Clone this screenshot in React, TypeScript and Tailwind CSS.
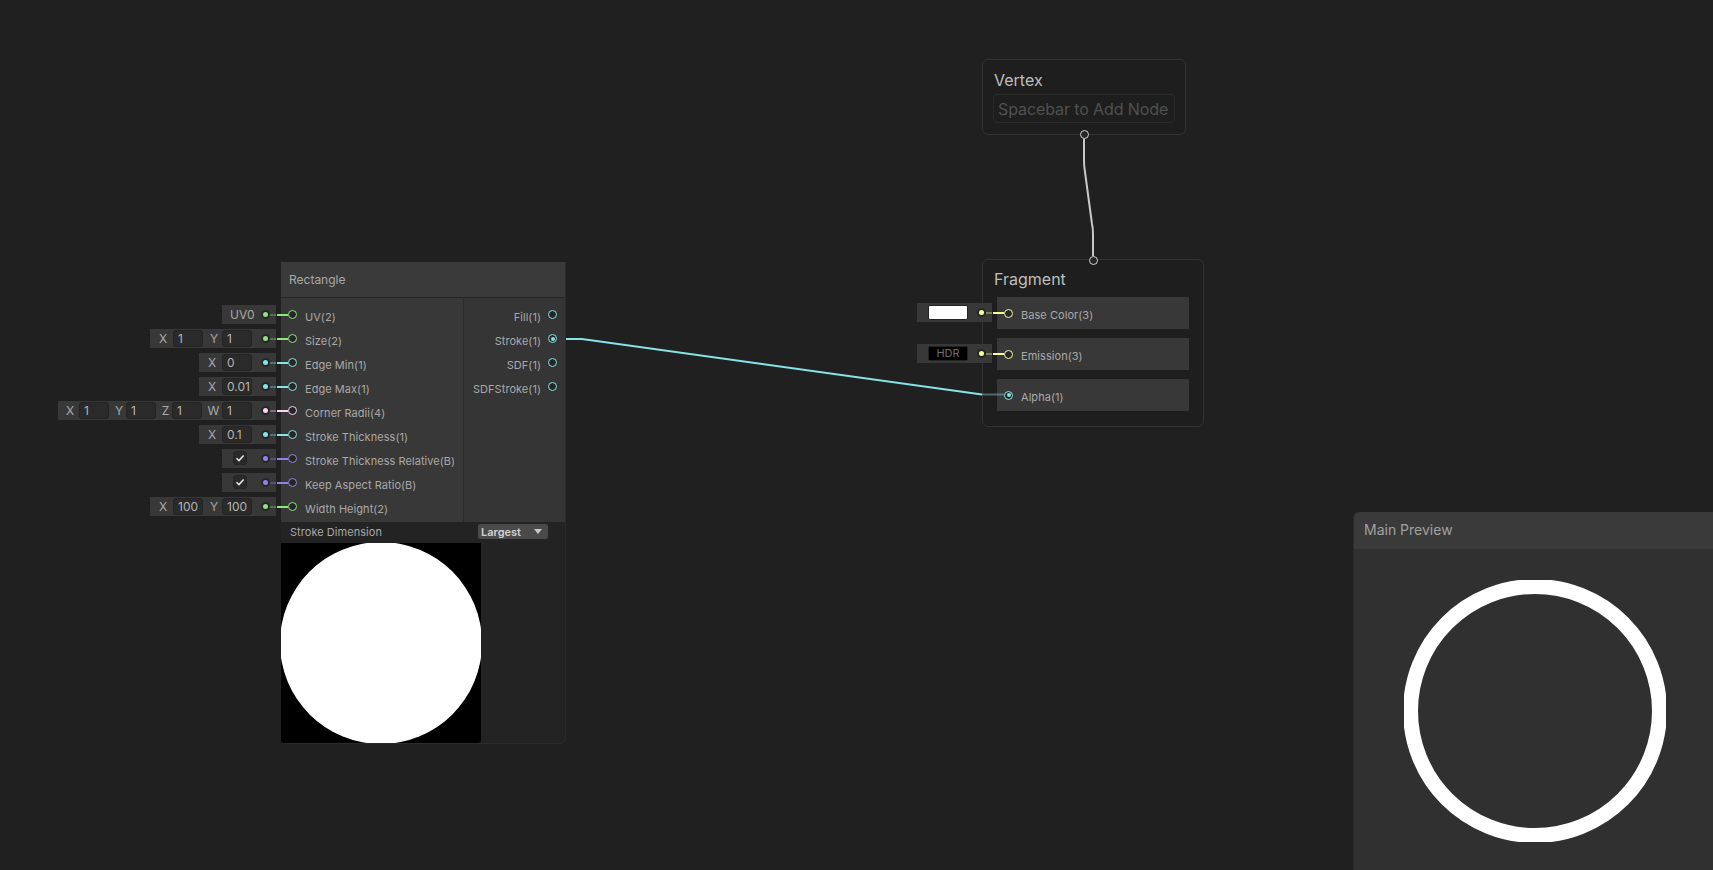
import { ReactNode } from "react";

type PortKind = "green" | "cyan" | "pink" | "purple" | "yellow";

const portStyles: Record<PortKind, { border: string; fill: string; dim: string }> = {
  green: { border: "border-[#8fe57f]", fill: "bg-[#8fe57f]", dim: "bg-[#8fe57f]/35" },
  cyan: { border: "border-[#84e4e7]", fill: "bg-[#84e4e7]", dim: "bg-[#84e4e7]/35" },
  pink: { border: "border-[#fcd1f1]", fill: "bg-[#fcd1f1]", dim: "bg-[#fcd1f1]/35" },
  purple: { border: "border-[#9481e6]", fill: "bg-[#9481e6]", dim: "bg-[#9481e6]/35" },
  yellow: { border: "border-[#f6ff9a]", fill: "bg-[#f6ff9a]", dim: "bg-[#f6ff9a]/35" },
};

interface Field {
  axis: string;
  value: string;
  labelWidth: string;
}

interface Input {
  name: string;
  kind: PortKind;
  text?: string;
  fields?: Field[];
  check?: boolean;
}

const inputs: Input[] = [
  { name: "UV(2)", kind: "green", text: "UV0" },
  {
    name: "Size(2)",
    kind: "green",
    fields: [
      { axis: "X", value: "1", labelWidth: "w-[23px]" },
      { axis: "Y", value: "1", labelWidth: "w-[19px]" },
    ],
  },
  { name: "Edge Min(1)", kind: "cyan", fields: [{ axis: "X", value: "0", labelWidth: "w-[23px]" }] },
  { name: "Edge Max(1)", kind: "cyan", fields: [{ axis: "X", value: "0.01", labelWidth: "w-[23px]" }] },
  {
    name: "Corner Radii(4)",
    kind: "pink",
    fields: [
      { axis: "X", value: "1", labelWidth: "w-[21px]" },
      { axis: "Y", value: "1", labelWidth: "w-[17px]" },
      { axis: "Z", value: "1", labelWidth: "w-[16px]" },
      { axis: "W", value: "1", labelWidth: "w-[20px]" },
    ],
  },
  { name: "Stroke Thickness(1)", kind: "cyan", fields: [{ axis: "X", value: "0.1", labelWidth: "w-[23px]" }] },
  { name: "Stroke Thickness Relative(B)", kind: "purple", check: true },
  { name: "Keep Aspect Ratio(B)", kind: "purple", check: true },
  {
    name: "Width Height(2)",
    kind: "green",
    fields: [
      { axis: "X", value: "100", labelWidth: "w-[23px]" },
      { axis: "Y", value: "100", labelWidth: "w-[19px]" },
    ],
  },
];

const outputs = [
  { name: "Fill(1)", connected: false },
  { name: "Stroke(1)", connected: true },
  { name: "SDF(1)", connected: false },
  { name: "SDFStroke(1)", connected: false },
];

function ChipTail({ kind }: { kind: PortKind }) {
  const style = portStyles[kind];
  return (
    <>
      <div className="ml-[9px] flex h-[9px] w-[9px] items-center justify-center rounded-full bg-[#262626]">
        <div className={`h-[5px] w-[5px] rounded-full ${style.fill}`} />
      </div>
      <div className={`h-[2px] w-[6px] ${style.dim}`} />
    </>
  );
}

function InputChip({ input }: { input: Input }) {
  return (
    <div className="flex h-[19px] items-center bg-[#383838] text-[12px] text-[#a8a8a8]">
      {input.text && <div className="w-[30px] whitespace-nowrap pl-[8px]">{input.text}</div>}
      {input.check && (
        <div className="mb-[2px] ml-[11px] mr-[5px] flex h-[14px] w-[14px] items-center justify-center rounded-[3px] border border-[#232323] bg-[#2a2a2a]">
          <svg width="10" height="10" viewBox="0 0 10 10" fill="none">
            <path d="M1.5 5.2 4 7.6 8.6 2.4" stroke="#e6e6e6" strokeWidth="1.5" />
          </svg>
        </div>
      )}
      {input.fields?.map((field) => (
        <div key={field.axis} className="flex items-center">
          <div className={`${field.labelWidth} pl-[3px] text-center`}>{field.axis}</div>
          <div className="flex h-[17px] w-[30px] items-center rounded-[3px] border border-[#232323] bg-[#2a2a2a] pl-[4px] text-[#b4b4b4]">
            {field.value}
          </div>
        </div>
      ))}
      <ChipTail kind={input.kind} />
    </div>
  );
}

function Ring({ kind, connected }: { kind: PortKind; connected?: boolean }) {
  const style = portStyles[kind];
  return (
    <div
      className={`flex h-[9px] w-[9px] shrink-0 items-center justify-center rounded-full border-[1.5px] ${style.border} bg-[#262626]`}
    >
      {connected && <div className={`h-[4px] w-[4px] rounded-full ${style.fill}`} />}
    </div>
  );
}

function PortLabel({ children }: { children: ReactNode }) {
  return <span className="mt-[4px] whitespace-nowrap text-[11px] leading-4 tracking-[0.05px] text-[#a8a8a8]">{children}</span>;
}

function RectangleNode() {
  return (
    <div className="absolute left-[58px] top-[262px] flex">
      <div className="flex w-[218px] flex-col items-end gap-[5px] pt-[43px]">
        {inputs.map((input) => (
          <InputChip key={input.name} input={input} />
        ))}
      </div>
      <div className="ml-[5px] flex h-[482px] w-[285px] flex-col rounded-b-[6px] border-b border-r border-[#2b2b2b] bg-[#232323]">
        <div className="flex h-[36px] items-center border-b border-[#262626] bg-[#3a3a3a] pl-[8px] pt-[1px] text-[12px] text-[#a8a8a8]">
          Rectangle
        </div>
        <div className="flex h-[225px]">
          <div className="flex w-[183px] flex-col border-r border-[#2c2c2c] bg-[#383838] pt-[5px]">
            {inputs.map((input) => (
              <div key={input.name} className="flex h-[24px] items-center">
                <div className={`-ml-[4px] h-[2px] w-[11px] ${portStyles[input.kind].fill}`} />
                <Ring kind={input.kind} />
                <div className="ml-[8px] flex">
                  <PortLabel>{input.name}</PortLabel>
                </div>
              </div>
            ))}
          </div>
          <div className="flex flex-1 flex-col bg-[#353535] pt-[5px]">
            {outputs.map((output) => (
              <div key={output.name} className="flex h-[24px] items-center justify-end pr-[8px]">
                <PortLabel>{output.name}</PortLabel>
                <div className="ml-[7px]">
                  <Ring kind="cyan" connected={output.connected} />
                </div>
              </div>
            ))}
          </div>
        </div>
        <div className="flex h-[21px] items-center justify-between pb-[2px] pl-[9px] pr-[17px]">
          <span className="text-[11px] tracking-[0.05px] text-[#a8a8a8]">Stroke Dimension</span>
          <div className="flex h-[15px] w-[70px] items-center justify-between rounded-[2px] bg-[#4a4a4a] pl-[3px] pr-[6px] text-[11px] font-semibold text-[#d2d2d2]">
            Largest
            <svg width="8" height="5" viewBox="0 0 8 5">
              <polygon points="0,0 8,0 4,5" fill="#c8c8c8" />
            </svg>
          </div>
        </div>
        <div className="h-[200px] w-[200px] overflow-hidden rounded-b-[3px] bg-black">
          <div className="-m-[1px] h-[202px] w-[202px] rounded-full bg-white" />
        </div>
      </div>
    </div>
  );
}

function VertexNode() {
  return (
    <div className="absolute left-[982px] top-[59px] h-[76px] w-[204px] rounded-[6px] border border-[#333333] bg-[#1e1e1e] px-[10px] pt-[9px]">
      <div className="pl-[1px] text-[16px] leading-[22px] text-[#bebebe]">Vertex</div>
      <div className="mt-[3px] flex h-[29px] items-center whitespace-nowrap rounded-[4px] border border-[#2a2a2a] pl-[4px] text-[16px] tracking-[-0.1px] text-[#505050]">
        Spacebar to Add Node
      </div>
      <div className="absolute -bottom-[5px] left-[97px] h-[9px] w-[9px] rounded-full border-[1.5px] border-[#d2d2d2] bg-[#262626]" />
    </div>
  );
}

function FragmentRow({ label, kind, children }: { label: string; kind: PortKind; children?: ReactNode }) {
  const style = portStyles[kind];
  return (
    <div className="relative flex h-[32px] items-center bg-[#383838]">
      {children && (
        <div className="absolute right-full top-[6px] mr-[5px] flex h-[19px] w-[75px] items-center bg-[#383838] pl-[11px]">
          {children}
          <ChipTail kind={kind} />
        </div>
      )}
      <div className={`-ml-[4px] h-[2px] w-[11px] ${children ? style.fill : "bg-transparent"}`} />
      <Ring kind={kind} connected={!children} />
      <div className="ml-[8px] flex">
        <PortLabel>{label}</PortLabel>
      </div>
    </div>
  );
}

function FragmentNode() {
  return (
    <div className="absolute left-[982px] top-[259px] h-[168px] w-[222px] rounded-[6px] border border-[#333333] bg-[#1e1e1e] px-[14px] pt-[7px]">
      <div className="-ml-[3px] text-[16px] leading-[24px] text-[#bebebe]">Fragment</div>
      <div className="mt-[6px] flex flex-col gap-[9px]">
        <FragmentRow label="Base Color(3)" kind="yellow">
          <div className="h-[15px] w-[40px] rounded-[2px] border border-[#232323] bg-white" />
        </FragmentRow>
        <FragmentRow label="Emission(3)" kind="yellow">
          <div className="flex h-[15px] w-[40px] items-center justify-center rounded-[2px] border border-[#232323] bg-black text-[11px] text-[#6e6e6e]">
            HDR
          </div>
        </FragmentRow>
        <FragmentRow label="Alpha(1)" kind="cyan" />
      </div>
      <div className="absolute -top-[4px] left-[106px] h-[9px] w-[9px] rounded-full border-[1.5px] border-[#d2d2d2] bg-[#262626]" />
    </div>
  );
}

function MainPreview() {
  return (
    <div className="absolute left-[1353px] top-[512px] h-[358px] w-[360px] rounded-tl-[6px] border-l border-[#2a2a2a] bg-[#303030]">
      <div className="flex h-[37px] items-center rounded-tl-[6px] bg-[#3a3a3a] pb-[2px] pl-[10px] text-[14px] text-[#a0a0a0]">
        Main Preview
      </div>
      <div className="ml-[50px] mt-[31px] h-[262px] w-[262px] overflow-hidden">
        <div className="-m-[1px] h-[264px] w-[264px] rounded-full border-[15px] border-white" />
      </div>
    </div>
  );
}

function Wires() {
  return (
    <svg className="absolute inset-0 h-full w-full" fill="none">
      <path d="M566 339 H582 L982 394.5" stroke="#84e4e7" strokeWidth="2" />
      <path d="M982 394.5 H1004" stroke="#84e4e7" strokeOpacity="0.4" strokeWidth="2" />
      <path d="M1084 139 V160 Q1084 166 1085 172 L1092 224 Q1093 228 1093 234 V256" stroke="#c8c8c8" strokeWidth="2" />
    </svg>
  );
}

export default function App() {
  return (
    <div className="relative h-[870px] w-full overflow-hidden bg-[#202020] font-['Inter',sans-serif]">
      <RectangleNode />
      <VertexNode />
      <FragmentNode />
      <Wires />
      <MainPreview />
    </div>
  );
}
